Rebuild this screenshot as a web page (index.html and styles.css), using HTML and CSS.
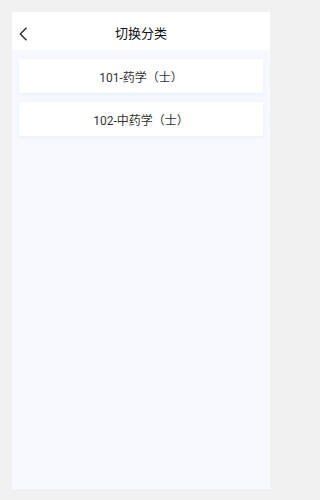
FILE: index.html
```html
<!DOCTYPE html>
<html lang="zh">
<head>
<meta charset="utf-8">
<link rel="stylesheet" href="styles.css">
</head>
<body>
<div class="panel">
  <header class="bar">
    <svg class="back" width="9" height="14" viewBox="0 0 9 14"><path d="M7.5 0.8 L1.3 7 L7.5 13.2" fill="none" stroke="#222" stroke-width="1.3"/></svg>
    <h1 class="title">切换分类</h1>
  </header>
  <div class="list">
    <div class="card">101-药学（士）</div>
    <div class="card">102-中药学（士）</div>
  </div>
</div>
</body>
</html>
```
FILE: styles.css
```css
html, body { margin: 0; padding: 0; }
html { background: #f1f1f1; }
body {
  background: #f1f1f1;
  font-family: Roboto, "Noto Sans CJK SC", sans-serif;
  width: 281px;
  height: 500px;
  padding: 12px 11px 11px 12px;
  box-sizing: border-box;
}
.panel {
  background: #f7f9fe;
  height: 477px;
  display: flex;
  flex-direction: column;
}
.bar {
  background: #fff;
  height: 38px;
  position: relative;
  display: flex;
  align-items: center;
  justify-content: center;
}
.back { position: absolute; left: 7px; top: 15px; }
.title {
  margin: 0;
  font-size: 13px;
  font-weight: 400;
  color: #111;
  padding-top: 2px;
}
.list {
  padding: 9px 7px 0 7px;
  display: flex;
  flex-direction: column;
  gap: 9px;
}
.card {
  background: #fff;
  height: 34px;
  display: flex;
  align-items: center;
  justify-content: center;
  font-size: 12px;
  color: #333;
  box-shadow: 0 1px 4px rgba(120, 150, 210, 0.12);
}
```
